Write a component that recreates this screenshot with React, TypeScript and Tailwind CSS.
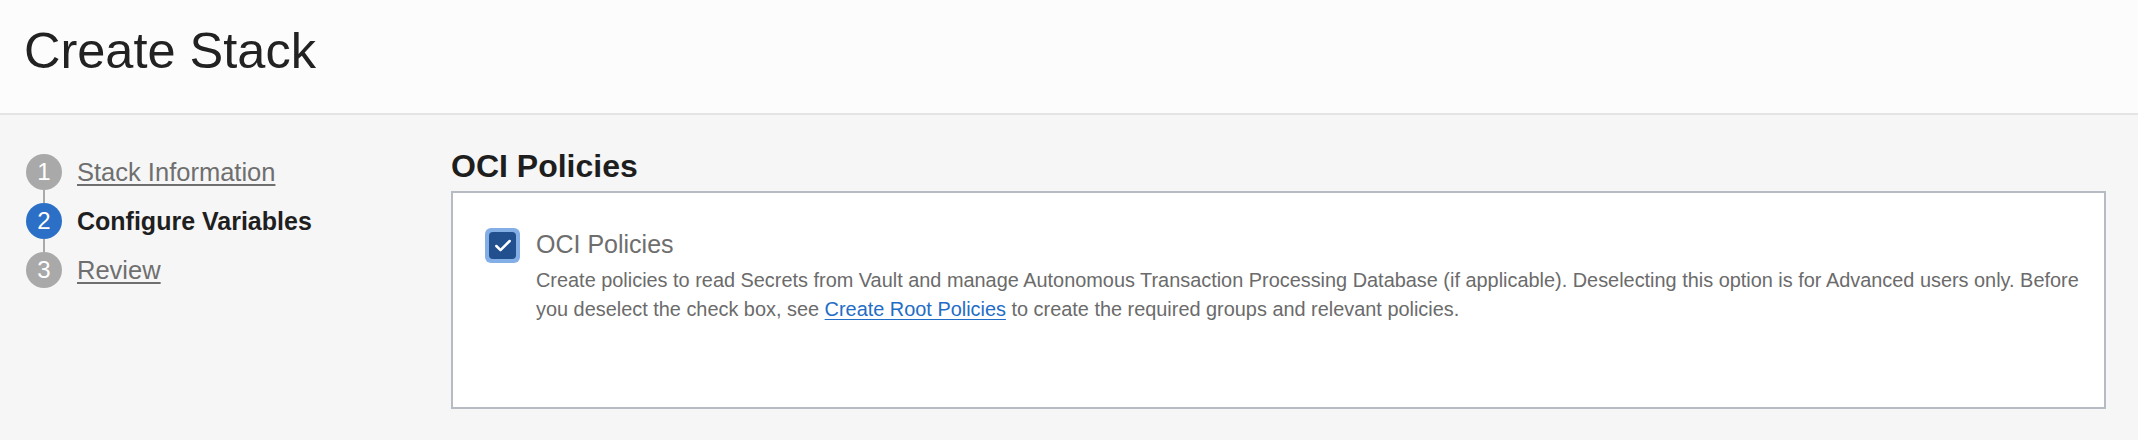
import { Check } from "lucide-react";

const steps = [
  { n: 1, label: "Stack Information", state: "done" },
  { n: 2, label: "Configure Variables", state: "current" },
  { n: 3, label: "Review", state: "todo" },
];

function Stepper() {
  return (
    <ol className="flex flex-col">
      {steps.map((s, i) => (
        <li key={s.n} className="flex flex-col">
          <div className="flex items-center gap-[15px]">
            <span
              className={
                s.state === "current"
                  ? "flex h-[36px] w-[36px] items-center justify-center rounded-full bg-[#2b6fc6] text-[24px] leading-none text-white"
                  : "flex h-[36px] w-[36px] items-center justify-center rounded-full bg-[#a9a9a9] text-[24px] leading-none text-white"
              }
            >
              {s.n}
            </span>
            {s.state === "current" ? (
              <span className="text-[25px] font-bold leading-[36px] text-[#1f1f1f]">{s.label}</span>
            ) : (
              <a href="#" className="text-[25.5px] leading-[36px] text-[#6f6f6f] underline underline-offset-[3px] decoration-[1.5px]">
                {s.label}
              </a>
            )}
          </div>
          {i < steps.length - 1 && <div className="ml-[17px] h-[13px] w-[2px] bg-[#a9a9a9]" />}
        </li>
      ))}
    </ol>
  );
}

export default function App() {
  return (
    <div className="h-[440px] w-full overflow-hidden bg-[#f6f6f6] font-['Liberation_Sans',Arial,sans-serif]">
      {/* Header */}
      <header className="h-[115px] border-b-2 border-[#e4e4e4] bg-[#fcfcfc] pl-[24px] pt-[26px]">
        <h1 className="text-[50.5px] leading-[50px] text-[#222222]">Create Stack</h1>
      </header>

      <div className="flex">
        {/* Steps */}
        <aside className="w-[451px] shrink-0 pl-[26px] pt-[39px]">
          <Stepper />
        </aside>

        {/* Main */}
        <main className="flex-1 pr-[32px] pt-[35px]">
          <h2 className="text-[32px] font-bold leading-[32px] text-[#1e1e1e]">OCI Policies</h2>
          <section className="mt-[9px] h-[218px] border-2 border-[#b7bbc3] bg-white pl-[32px] pr-[24px] pt-[35px]">
            <div className="flex gap-[16px]">
              <span className="flex h-[35px] w-[35px] shrink-0 items-center justify-center rounded-[6px] bg-[#84aee6]">
                <span className="flex h-[27px] w-[27px] items-center justify-center rounded-[4px] bg-[#224f8e]">
                  <Check className="h-[20px] w-[20px] text-white" strokeWidth={3} />
                </span>
              </span>
              <div className="flex flex-col">
                <label className="pt-[4px] text-[25px] leading-[25px] text-[#6e6e6e]">OCI Policies</label>
                <p className="mt-[9px] text-[19.9px] leading-[28.5px] text-[#6b6b6b]">
                  Create policies to read Secrets from Vault and manage Autonomous Transaction Processing Database (if
                  applicable). Deselecting this option is for Advanced users only. Before you deselect the check box, see{" "}
                  <a href="#" className="text-[#1f6dc6] underline underline-offset-[3px]">
                    Create Root Policies
                  </a>{" "}
                  to create the required groups and relevant policies.
                </p>
              </div>
            </div>
          </section>
        </main>
      </div>
    </div>
  );
}
